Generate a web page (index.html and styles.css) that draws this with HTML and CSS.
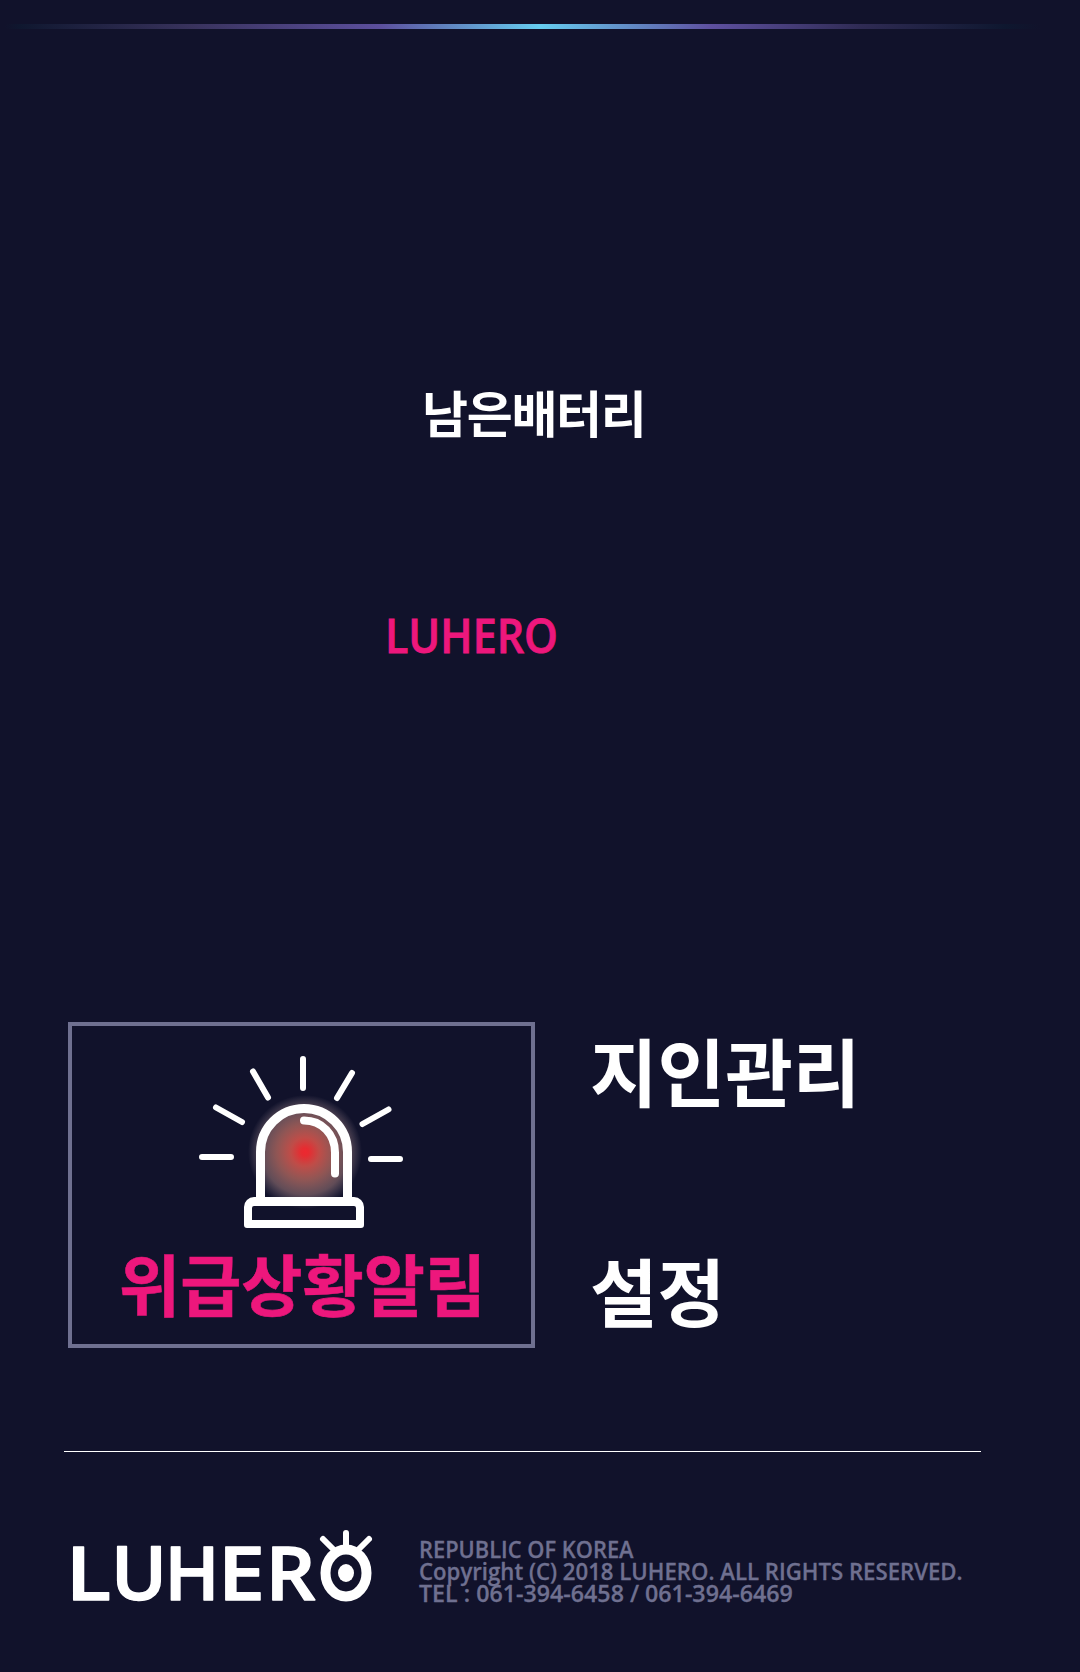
FILE: index.html
```html
<!DOCTYPE html>
<html lang="ko">
<head>
<meta charset="utf-8">
<title>LUHERO</title>
<link rel="stylesheet" href="styles.css">
</head>
<body>
<div class="glow-line"></div>
<main class="screen">
  <section class="status">
    <h1 class="battery"><span class="fit">남은배터리</span></h1>
    <p class="device"><span class="fit">LUHERO</span></p>
  </section>
  <section class="actions">
    <a class="alert">
      <svg class="siren" width="206" height="174" viewBox="199 1055 206 174">
        <defs>
          <radialGradient id="glow">
            <stop offset="0" stop-color="#ed2830"/>
            <stop offset=".07" stop-color="#e62c31"/>
            <stop offset=".25" stop-color="#c94f49" stop-opacity=".95"/>
            <stop offset=".5" stop-color="#b96c62" stop-opacity=".75"/>
            <stop offset=".75" stop-color="#a9807e" stop-opacity=".53"/>
            <stop offset="1" stop-color="#9c8f9c" stop-opacity="0"/>
          </radialGradient>
        </defs>
        <circle cx="305" cy="1152" r="57" fill="url(#glow)"/>
        <g fill="none" stroke="#fff" stroke-linecap="round">
          <path stroke-width="6" d="M303 1059v29M253 1071.500l15 26M216 1107.500l26 14.500M202 1157h29M352 1073l-15 25M388.500 1109.500l-26 14.500M371 1159h29"/>
          <path stroke-width="9" stroke-linecap="butt" d="M260.500 1199V1152a43.500 43.500 0 0 1 87 0V1199"/>
          <path stroke-width="8" d="M304 1120.500c18 0 31 14 31 32v21"/>
        </g>
        <path fill="#fff" fill-rule="evenodd" d="M244 1207a10 10 0 0 1 10-10h100a10 10 0 0 1 10 10v18a3 3 0 0 1-3 3H247a3 3 0 0 1-3-3zM252 1208v12h104v-12a2 2 0 0 0-2-2H254a2 2 0 0 0-2 2z"/>
      </svg>
      <span class="alert-label"><span class="fit">위급상황알림</span></span>
    </a>
    <nav class="menu">
      <a class="menu-item"><span class="fit">지인관리</span></a>
      <a class="menu-item"><span class="fit">설정</span></a>
    </nav>
  </section>
  <footer class="footer">
    <svg class="logo" width="302" height="74" viewBox="71 1530 302 74">
      <g class="logo-text">
        <text y="1599.500" x="66" textLength="45" lengthAdjust="spacingAndGlyphs">L</text>
        <text y="1599.500" x="111" textLength="56" lengthAdjust="spacingAndGlyphs">U</text>
        <text y="1599.500" x="164.500" textLength="55" lengthAdjust="spacingAndGlyphs">H</text>
        <text y="1599.500" x="218" textLength="47" lengthAdjust="spacingAndGlyphs">E</text>
        <text y="1599.500" x="265.500" textLength="50" lengthAdjust="spacingAndGlyphs">R</text>
      </g>
      <ellipse cx="346" cy="1573" rx="20.500" ry="23.500" fill="none" stroke="#fff" stroke-width="10"/>
      <ellipse cx="346" cy="1573" rx="8" ry="9" fill="#fff"/>
      <path fill="none" stroke="#fff" stroke-width="6" stroke-linecap="round" d="M346 1533v14M323 1539l10 10M369 1539l-10 10"/>
    </svg>
    <div class="company">
      <div><span class="fit line-a">REPUBLIC OF KOREA</span></div>
      <div><span class="fit line-b">Copyright (C) 2018 LUHERO. ALL RIGHTS RESERVED.</span></div>
      <div><span class="fit line-c">TEL : 061-394-6458 / 061-394-6469</span></div>
    </div>
  </footer>
</main>
</body>
</html>
```

FILE: styles.css
```css
* { box-sizing: border-box; }

body {
  margin: 0;
  padding-top: 24px;
  height: 1672px;
  overflow: hidden;
  background: #11122b;
  color: #fff;
  font-family: "Noto Sans CJK KR", sans-serif;
  font-weight: 700;
}

.glow-line {
  width: 1080px;
  height: 5px;
  background: linear-gradient(90deg, #11122b 5px, #0f172f 20px, #38325c 190px, #5c4f9d 380px, #66cdf0 540px, #5e50a0 710px, #2f2b54 860px, #0e172f 1005px, #11122b 1040px);
}

.screen { padding: 0 64px; }

.fit {
  display: inline-block;
  transform-origin: 0 50%;
  white-space: nowrap;
}

.status {
  display: flex;
  flex-direction: column;
  height: 993px;
  padding: 347px 0 0 324px;
}

.battery {
  margin: 0 0 0 34px;
  height: 70px;
  font-size: 50px;
  line-height: 70px;
  letter-spacing: -1.300px;
}

.device {
  margin: 157px 0 0 -3px;
  height: 64px;
  color: #ed177c;
  font: 600 47px/64px "Open Sans", sans-serif;
  -webkit-text-stroke: .8px #ed177c;
}

.device .fit { transform: scaleX(.915); }

.actions { display: flex; height: 429px; }

.alert {
  display: flex;
  flex-direction: column;
  align-items: center;
  width: 467px;
  height: 326px;
  margin-left: 4px;
  padding-top: 29px;
  border: 4px solid #6f7090;
}

.alert-label {
  margin-top: 3px;
  padding-left: 2px;
  color: #ed177c;
  font-size: 66.500px;
  line-height: 100px;
  -webkit-text-stroke: .6px #ed177c;
}

.menu { display: flex; flex-direction: column; gap: 120px; padding-left: 55px; }

.menu-item { height: 100px; margin-top: -3px; margin-bottom: 3px; font-size: 73.500px; line-height: 100px; }

.footer {
  display: flex;
  width: 917px;
  padding: 78px 0 0 7px;
  border-top: 1px solid #fff;
}

.logo { flex: none; overflow: visible; }

.logo-text {
  fill: #fff;
  stroke: #fff;
  stroke-width: 1.400px;
  stroke-linejoin: round;
  font: 600 75px "Open Sans", sans-serif;
}

.company {
  padding: 8px 0 0 46px;
  color: #6f7090;
  font: 600 23px/22px "Open Sans", sans-serif;
  -webkit-text-stroke: .3px #6f7090;
}

.line-a { transform: scaleX(.95); }
.line-b { transform: scaleX(.964); }
.line-c { transform: scaleX(1.01); }
```
